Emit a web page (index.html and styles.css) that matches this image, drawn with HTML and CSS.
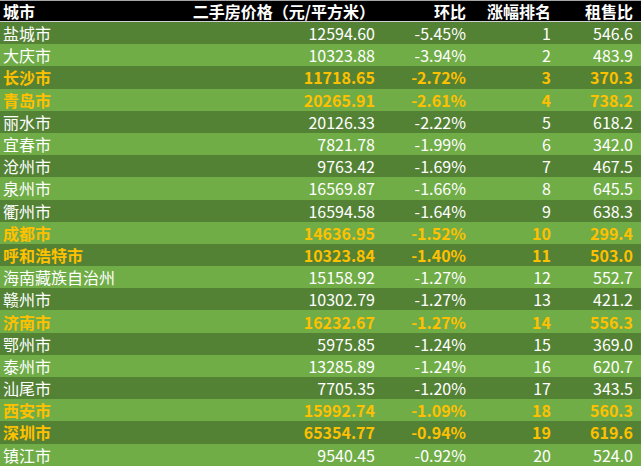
FILE: index.html
```html
<!DOCTYPE html>
<html lang="zh">
<head>
<meta charset="utf-8">
<title>二手房价格</title>
<link rel="stylesheet" href="styles.css">
</head>
<body>
<div class="table">
  <div class="row head">
    <div class="c city">城市</div>
    <div class="c">二手房价格（元/平方米）</div>
    <div class="c">环比</div>
    <div class="c">涨幅排名</div>
    <div class="c">租售比</div>
  </div>
  <div class="row dark"><div class="c city">盐城市</div><div class="c">12594.60</div><div class="c">-5.45%</div><div class="c">1</div><div class="c">546.6</div></div>
  <div class="row light"><div class="c city">大庆市</div><div class="c">10323.88</div><div class="c">-3.94%</div><div class="c">2</div><div class="c">483.9</div></div>
  <div class="row dark hl"><div class="c city">长沙市</div><div class="c">11718.65</div><div class="c">-2.72%</div><div class="c">3</div><div class="c">370.3</div></div>
  <div class="row light hl"><div class="c city">青岛市</div><div class="c">20265.91</div><div class="c">-2.61%</div><div class="c">4</div><div class="c">738.2</div></div>
  <div class="row dark"><div class="c city">丽水市</div><div class="c">20126.33</div><div class="c">-2.22%</div><div class="c">5</div><div class="c">618.2</div></div>
  <div class="row light"><div class="c city">宜春市</div><div class="c">7821.78</div><div class="c">-1.99%</div><div class="c">6</div><div class="c">342.0</div></div>
  <div class="row dark"><div class="c city">沧州市</div><div class="c">9763.42</div><div class="c">-1.69%</div><div class="c">7</div><div class="c">467.5</div></div>
  <div class="row light"><div class="c city">泉州市</div><div class="c">16569.87</div><div class="c">-1.66%</div><div class="c">8</div><div class="c">645.5</div></div>
  <div class="row dark"><div class="c city">衢州市</div><div class="c">16594.58</div><div class="c">-1.64%</div><div class="c">9</div><div class="c">638.3</div></div>
  <div class="row light hl"><div class="c city">成都市</div><div class="c">14636.95</div><div class="c">-1.52%</div><div class="c">10</div><div class="c">299.4</div></div>
  <div class="row dark hl"><div class="c city">呼和浩特市</div><div class="c">10323.84</div><div class="c">-1.40%</div><div class="c">11</div><div class="c">503.0</div></div>
  <div class="row light"><div class="c city">海南藏族自治州</div><div class="c">15158.92</div><div class="c">-1.27%</div><div class="c">12</div><div class="c">552.7</div></div>
  <div class="row dark"><div class="c city">赣州市</div><div class="c">10302.79</div><div class="c">-1.27%</div><div class="c">13</div><div class="c">421.2</div></div>
  <div class="row light hl"><div class="c city">济南市</div><div class="c">16232.67</div><div class="c">-1.27%</div><div class="c">14</div><div class="c">556.3</div></div>
  <div class="row dark"><div class="c city">鄂州市</div><div class="c">5975.85</div><div class="c">-1.24%</div><div class="c">15</div><div class="c">369.0</div></div>
  <div class="row light"><div class="c city">泰州市</div><div class="c">13285.89</div><div class="c">-1.24%</div><div class="c">16</div><div class="c">620.7</div></div>
  <div class="row dark"><div class="c city">汕尾市</div><div class="c">7705.35</div><div class="c">-1.20%</div><div class="c">17</div><div class="c">343.5</div></div>
  <div class="row light hl"><div class="c city">西安市</div><div class="c">15992.74</div><div class="c">-1.09%</div><div class="c">18</div><div class="c">560.3</div></div>
  <div class="row dark hl"><div class="c city">深圳市</div><div class="c">65354.77</div><div class="c">-0.94%</div><div class="c">19</div><div class="c">619.6</div></div>
  <div class="row light"><div class="c city">镇江市</div><div class="c">9540.45</div><div class="c">-0.92%</div><div class="c">20</div><div class="c">524.0</div></div>
</div>
</body>
</html>
```

FILE: styles.css
```css
html, body {
  margin: 0;
  padding: 0;
  background: #ffffff;
}
.table {
  width: 641px;
  font-family: "Noto Sans CJK SC", "Noto Sans", sans-serif;
  font-size: 16px;
  color: #ffffff;
}
.row {
  display: grid;
  grid-template-columns: 168px 211px 91px 85px 86px;
  height: 22.2px;
  align-items: center;
}
.c {
  text-align: right;
  padding-right: 4px;
  line-height: 22px;
  white-space: nowrap;
}
.c.city {
  text-align: left;
  padding-left: 3px;
  padding-right: 0;
}
.row .c:last-child {
  padding-right: 8px;
}
.head {
  height: 20px;
  background: #000000;
  border-top: 1px solid #a6a6a6;
  border-bottom: 1px solid #d0d0d0;
  font-weight: bold;
}
.head .c {
  line-height: 20px;
}
.dark {
  background: #548235;
}
.light {
  background: #70ad47;
}
.hl {
  color: #ffc000;
  font-weight: bold;
}
```
